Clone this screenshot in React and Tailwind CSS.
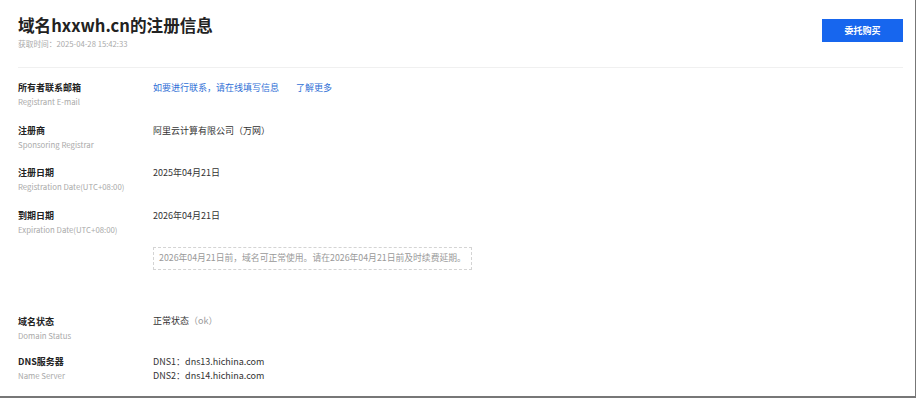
import React from "react";

const rows = [
  { cn: "所有者联系邮箱", en: "Registrant E-mail", key: "email" },
  { cn: "注册商", en: "Sponsoring Registrar", key: "registrar" },
  { cn: "注册日期", en: "Registration Date(UTC+08:00)", key: "reg" },
  { cn: "到期日期", en: "Expiration Date(UTC+08:00)", key: "exp" },
];

function Label({ cn, en }) {
  return (
    <div className="w-[135px] shrink-0">
      <div className="text-[9px] leading-[14px] font-bold text-[#222]">{cn}</div>
      <div className="text-[7.8px] leading-[14px] text-[#aaa]">{en}</div>
    </div>
  );
}

function Value({ k }) {
  if (k === "email") {
    return (
      <div className="text-[9px] leading-[14px] text-[#2f6fd6]">
        如要进行联系，请在线填写信息
        <span className="ml-[17px]">了解更多</span>
      </div>
    );
  }
  if (k === "registrar") {
    return <div className="text-[9px] leading-[14px] text-[#333]">阿里云计算有限公司（万网）</div>;
  }
  if (k === "reg") {
    return <div className="text-[9px] leading-[14px] text-[#333]">2025年04月21日</div>;
  }
  return (
    <div>
      <div className="text-[9px] leading-[14px] text-[#333]">2026年04月21日</div>
      <div className="mt-[24px] w-fit h-[23px] px-[5px] flex items-center border border-dashed border-[#d4d4d4] text-[8.8px] text-[#999]">
        2026年04月21日前，域名可正常使用。请在2026年04月21日前及时续费延期。
      </div>
    </div>
  );
}

export default function App() {
  return (
    <div
      className="w-[916px] h-[398px] bg-white border-r border-b-2 border-[#777] overflow-hidden"
      style={{ fontFamily: '"Noto Sans CJK SC", "Noto Sans", sans-serif' }}
    >
      <div className="pl-[18px] pr-[12px]">
        <div className="flex justify-between items-start pt-[13px] pb-[17px] border-b border-[#f0f0f0]">
          <div>
            <h1 className="text-[16.6px] leading-[24px] font-bold text-[#222]">域名hxxwh.cn的注册信息</h1>
            <div className="mt-[1px] text-[7.7px] leading-[12px] text-[#aaa]">获取时间：2025-04-28 15:42:33</div>
          </div>
          <button className="mt-[6px] w-[81px] h-[23px] bg-[#1766ee] text-white text-[9px] font-bold">
            委托购买
          </button>
        </div>

        <div className="pt-[13px] flex flex-col gap-[14.5px]">
          {rows.map((r) => (
            <div key={r.key} className="flex items-start">
              <Label cn={r.cn} en={r.en} />
              <Value k={r.key} />
            </div>
          ))}
        </div>

        <div className="mt-[45px] flex items-start">
          <Label cn="域名状态" en="Domain Status" />
          <div className="text-[9px] leading-[14px] text-[#333] -mt-[1px]">
            正常状态<span className="text-[#999]">（ok）</span>
          </div>
        </div>

        <div className="mt-[12px] flex items-start">
          <Label cn="DNS服务器" en="Name Server" />
          <div className="text-[9px] leading-[14px] text-[#333]">
            <div>DNS1：dns13.hichina.com</div>
            <div>DNS2：dns14.hichina.com</div>
          </div>
        </div>
      </div>
    </div>
  );
}
